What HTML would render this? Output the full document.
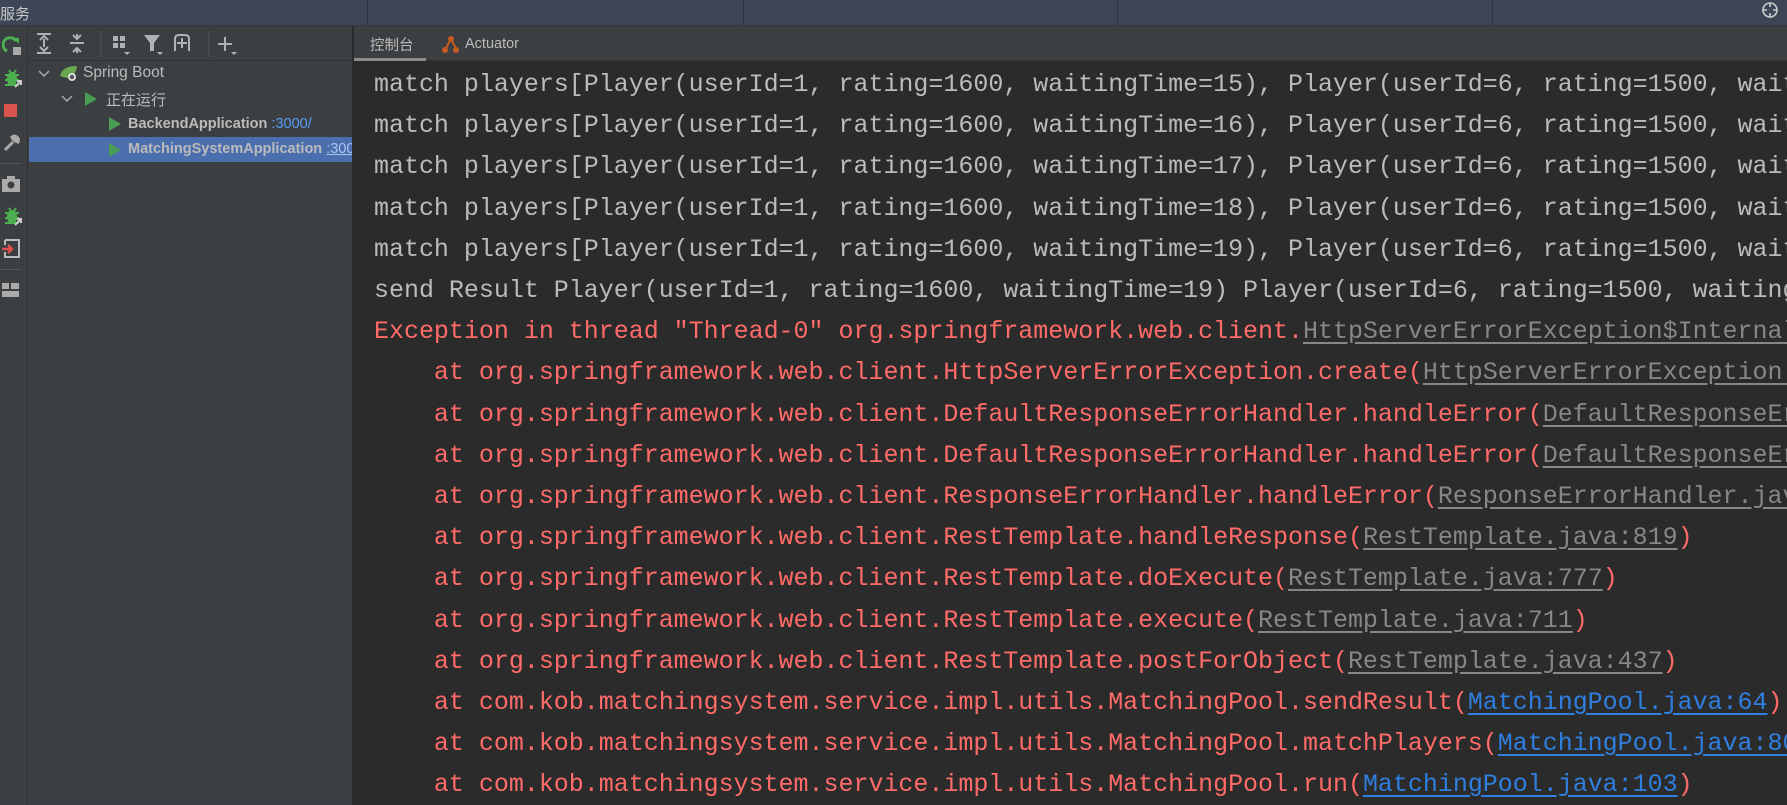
<!DOCTYPE html>
<html><head><meta charset="utf-8"><style>
*{margin:0;padding:0;box-sizing:border-box}
body{width:1787px;height:805px;overflow:hidden;background:#2b2b2b;position:relative;font-family:"Liberation Sans","Noto Sans CJK SC",sans-serif}
.abs{position:absolute}
#top{left:0;top:0;width:1787px;height:26px;background:#3c4657;border-bottom:1px solid #323844}
#strip{left:0;top:26px;width:28px;height:779px;background:#3c3f41;border-right:1px solid #323232}
#tree{left:28px;top:26px;width:324px;height:779px;background:#3c3f41}
#tabs{left:354px;top:26px;width:1433px;height:35px;background:#3c3f41;border-bottom:1px solid #323232}
#con{left:354px;top:61px;width:1433px;height:744px;background:#2b2b2b;overflow:hidden}
.ln{position:absolute;left:20px;white-space:pre;font-family:"Liberation Mono",monospace;font-size:24.97px;line-height:41px;color:#bbbbbb}
.r{color:#ff6b68}
.g{color:#878787;text-decoration:underline;text-underline-offset:4px}
.b{color:#2f7fe0;text-decoration:underline;text-underline-offset:4px}
.t{font-size:14.5px;color:#bbbbbb;white-space:nowrap}
</style></head><body>
<div id="top" class="abs">
 <div class="abs" style="left:0;top:3px;font-size:15px;color:#c8c8c8">服务</div>
 <div class="abs" style="left:367px;top:0;width:1px;height:26px;background:#2e3440"></div>
 <div class="abs" style="left:743px;top:0;width:1px;height:26px;background:#2e3440"></div>
 <div class="abs" style="left:1117px;top:0;width:1px;height:26px;background:#2e3440"></div>
 <div class="abs" style="left:1492px;top:0;width:1px;height:26px;background:#2e3440"></div>
 <svg class="abs" style="left:1761px;top:1px" width="18" height="18" viewBox="0 0 18 18"><circle cx="9" cy="9" r="7" fill="none" stroke="#ccc" stroke-width="1.6"/><path d="M9 2v4M9 12v4M2 9h4M12 9h4" stroke="#ccc" stroke-width="1.6"/></svg>
</div>
<div id="strip" class="abs">
 <svg class="abs" style="left:2px;top:9px" width="22" height="22" viewBox="0 0 22 22"><path d="M5 16a7 7 0 1 1 9-10" fill="none" stroke="#4caf50" stroke-width="3"/><path d="M11 3h6v6z" fill="#4caf50"/><rect x="11" y="12" width="8" height="8" fill="#aaa"/></svg>
 <svg class="abs" style="left:2px;top:42px" width="22" height="22" viewBox="0 0 22 22"><ellipse cx="10" cy="11" rx="5" ry="7" fill="#4caf50"/><path d="M3 7h14M3 12h14M3 17h14M7 2l2 3M14 2l-2 3" stroke="#4caf50" stroke-width="2"/><path d="M13 19l6-6M15 13h4v4" stroke="#ccc" stroke-width="2" fill="none"/></svg>
 <div class="abs" style="left:4px;top:78px;width:13px;height:13px;background:#d9534f"></div>
 <svg class="abs" style="left:2px;top:107px" width="20" height="20" viewBox="0 0 20 20"><path d="M3 17l8-8M10 4a4 4 0 0 1 6 5l-3-1-2-2z" stroke="#aaa" stroke-width="3" fill="#aaa"/></svg>
 <div class="abs" style="left:0;top:137px;width:22px;height:1px;background:#555"></div>
 <svg class="abs" style="left:1px;top:149px" width="20" height="18" viewBox="0 0 20 18"><rect x="1" y="4" width="18" height="13" fill="#aaa"/><rect x="6" y="1" width="8" height="4" fill="#aaa"/><circle cx="10" cy="10" r="3.5" fill="#3c3f41"/></svg>
 <svg class="abs" style="left:2px;top:180px" width="22" height="22" viewBox="0 0 22 22"><ellipse cx="10" cy="11" rx="5" ry="7" fill="#4caf50"/><path d="M3 7h14M3 12h14M3 17h14M7 2l2 3M14 2l-2 3" stroke="#4caf50" stroke-width="2"/><path d="M13 19l6-6M15 13h4v4" stroke="#ccc" stroke-width="2" fill="none"/></svg>
 <svg class="abs" style="left:1px;top:213px" width="20" height="20" viewBox="0 0 20 20"><path d="M4 1h14v17H4v-5M4 6V1" stroke="#bbb" stroke-width="2" fill="none"/><path d="M1 10h9M7 6l4 4-4 4" stroke="#e05050" stroke-width="2.5" fill="none"/></svg>
 <div class="abs" style="left:0;top:243px;width:22px;height:1px;background:#555"></div>
 <svg class="abs" style="left:2px;top:257px" width="18" height="14" viewBox="0 0 18 14"><rect x="0" y="0" width="7" height="6" fill="#aaa"/><rect x="9" y="0" width="8" height="6" fill="#aaa"/><rect x="0" y="8" width="17" height="6" fill="#aaa"/></svg>
</div>
<div id="tree" class="abs">
 <div class="abs" style="left:0;top:0;width:324px;height:35px;border-bottom:1px solid #323232"></div>
 <svg class="abs" style="left:8px;top:5px" width="300" height="26" viewBox="0 0 300 26" fill="none" stroke="#afb1b3" stroke-width="2">
  <path d="M1 3h14M1 22h14M4 9l4-4 4 4M4 16l4 4 4-4M8 8v8"/>
  <path d="M34 12h14M37 4l4 4 4-4M37 21l4-4 4 4M41 3v5M41 17v5"/>
  <path d="M65 0v26M173 0v26" stroke="#555" stroke-width="1"/>
  <rect x="77" y="5" width="5" height="5" fill="#afb1b3" stroke="none"/><rect x="84" y="5" width="5" height="5" fill="#afb1b3" stroke="none"/><rect x="77" y="12" width="5" height="5" fill="#afb1b3" stroke="none"/><rect x="84" y="12" width="5" height="5" fill="#afb1b3" stroke="none"/><path d="M88 21h6l-3 3z" fill="#afb1b3" stroke="none"/>
  <path d="M108 4h16l-6 8v8h-4v-8z" fill="#afb1b3" stroke="none"/><path d="M121 21h6l-3 3z" fill="#afb1b3" stroke="none"/>
  <path d="M139 20V8q0-4 4-4h6q4 0 4 4v12M141 12h10M146 7v10"/>
  <path d="M182 13h14M189 6v14"/><path d="M195 21h6l-3 3z" fill="#afb1b3" stroke="none"/>
 </svg>
 <svg class="abs" style="left:9px;top:40px" width="14" height="14" viewBox="0 0 14 14"><path d="M2 5l5 5 5-5" stroke="#aaa" stroke-width="1.5" fill="none"/></svg>
 <svg class="abs" style="left:31px;top:38px" width="20" height="18" viewBox="0 0 20 18"><path d="M1 12q2-10 17-10q-1 10-10 12z" fill="#6aa84f"/><circle cx="13" cy="13" r="4" fill="#ddd"/><circle cx="13" cy="13" r="2.2" fill="#555"/></svg>
 <div class="abs t" style="left:55px;top:38px;font-size:15.5px">Spring Boot</div>
 <svg class="abs" style="left:32px;top:65px" width="14" height="14" viewBox="0 0 14 14"><path d="M2 5l5 5 5-5" stroke="#aaa" stroke-width="1.5" fill="none"/></svg>
 <svg class="abs" style="left:57px;top:66px" width="12" height="14" viewBox="0 0 12 14"><path d="M0 0l12 7-12 7z" fill="#499c54"/></svg>
 <div class="abs t" style="left:78px;top:63px;font-size:15px">正在运行</div>
 <svg class="abs" style="left:81px;top:91px" width="12" height="14" viewBox="0 0 12 14"><path d="M0 0l12 7-12 7z" fill="#499c54"/></svg>
 <div class="abs t" style="left:100px;top:90px"><b>BackendApplication</b> <span style="color:#589df6">:3000/</span></div>
 <div class="abs" style="left:1px;top:111px;width:323px;height:25px;background:#4b6eaf"></div>
 <svg class="abs" style="left:81px;top:117px" width="12" height="14" viewBox="0 0 12 14"><path d="M0 0l12 7-12 7z" fill="#499c54"/></svg>
 <div class="abs t" style="left:100px;top:115px;width:224px;overflow:hidden"><b>MatchingSystemApplication</b> <span style="color:#a8c4f0;text-decoration:underline">:3001/</span></div>
</div>
<div class="abs" style="left:352px;top:26px;width:2px;height:779px;background:#2b2b2b"></div>
<div id="tabs" class="abs">
 <div class="abs" style="left:16px;top:8px;font-size:14.5px;color:#bbb">控制台</div>
 <div class="abs" style="left:0;top:32px;width:72px;height:3px;background:#8c8c8c"></div>
 <svg class="abs" style="left:87px;top:9px" width="20" height="20" viewBox="0 0 20 20"><path d="M4 15l6-11 6 11" stroke="#c55a22" stroke-width="2" fill="none"/><circle cx="10" cy="4" r="3" fill="#c55a22"/><circle cx="4" cy="15" r="3" fill="#c55a22"/><circle cx="15" cy="15" r="3" fill="#c55a22"/></svg>
 <div class="abs" style="left:111px;top:10px;font-size:14.5px;color:#bbb">Actuator</div>
</div>
<div id="con" class="abs">
<div class="ln" style="top:4px">match players[Player(userId=1, rating=1600, waitingTime=15), Player(userId=6, rating=1500, waitingTime=15)]</div>
<div class="ln" style="top:45px">match players[Player(userId=1, rating=1600, waitingTime=16), Player(userId=6, rating=1500, waitingTime=16)]</div>
<div class="ln" style="top:86px">match players[Player(userId=1, rating=1600, waitingTime=17), Player(userId=6, rating=1500, waitingTime=17)]</div>
<div class="ln" style="top:128px">match players[Player(userId=1, rating=1600, waitingTime=18), Player(userId=6, rating=1500, waitingTime=18)]</div>
<div class="ln" style="top:169px">match players[Player(userId=1, rating=1600, waitingTime=19), Player(userId=6, rating=1500, waitingTime=19)]</div>
<div class="ln" style="top:210px">send Result Player(userId=1, rating=1600, waitingTime=19) Player(userId=6, rating=1500, waitingTime=19)</div>
<div class="ln r" style="top:251px">Exception in thread "Thread-0" org.springframework.web.client.<span class="g">HttpServerErrorException$InternalServerError</span>: 500</div>
<div class="ln r" style="top:292px">    at org.springframework.web.client.HttpServerErrorException.create(<span class="g">HttpServerErrorException.java:100</span>)</div>
<div class="ln r" style="top:334px">    at org.springframework.web.client.DefaultResponseErrorHandler.handleError(<span class="g">DefaultResponseErrorHandler.java:188</span>)</div>
<div class="ln r" style="top:375px">    at org.springframework.web.client.DefaultResponseErrorHandler.handleError(<span class="g">DefaultResponseErrorHandler.java:125</span>)</div>
<div class="ln r" style="top:416px">    at org.springframework.web.client.ResponseErrorHandler.handleError(<span class="g">ResponseErrorHandler.java:63</span>)</div>
<div class="ln r" style="top:457px">    at org.springframework.web.client.RestTemplate.handleResponse(<span class="g">RestTemplate.java:819</span>)</div>
<div class="ln r" style="top:498px">    at org.springframework.web.client.RestTemplate.doExecute(<span class="g">RestTemplate.java:777</span>)</div>
<div class="ln r" style="top:540px">    at org.springframework.web.client.RestTemplate.execute(<span class="g">RestTemplate.java:711</span>)</div>
<div class="ln r" style="top:581px">    at org.springframework.web.client.RestTemplate.postForObject(<span class="g">RestTemplate.java:437</span>)</div>
<div class="ln r" style="top:622px">    at com.kob.matchingsystem.service.impl.utils.MatchingPool.sendResult(<span class="b">MatchingPool.java:64</span>)</div>
<div class="ln r" style="top:663px">    at com.kob.matchingsystem.service.impl.utils.MatchingPool.matchPlayers(<span class="b">MatchingPool.java:80</span>)</div>
<div class="ln r" style="top:704px">    at com.kob.matchingsystem.service.impl.utils.MatchingPool.run(<span class="b">MatchingPool.java:103</span>)</div>
</div>
</body></html>
